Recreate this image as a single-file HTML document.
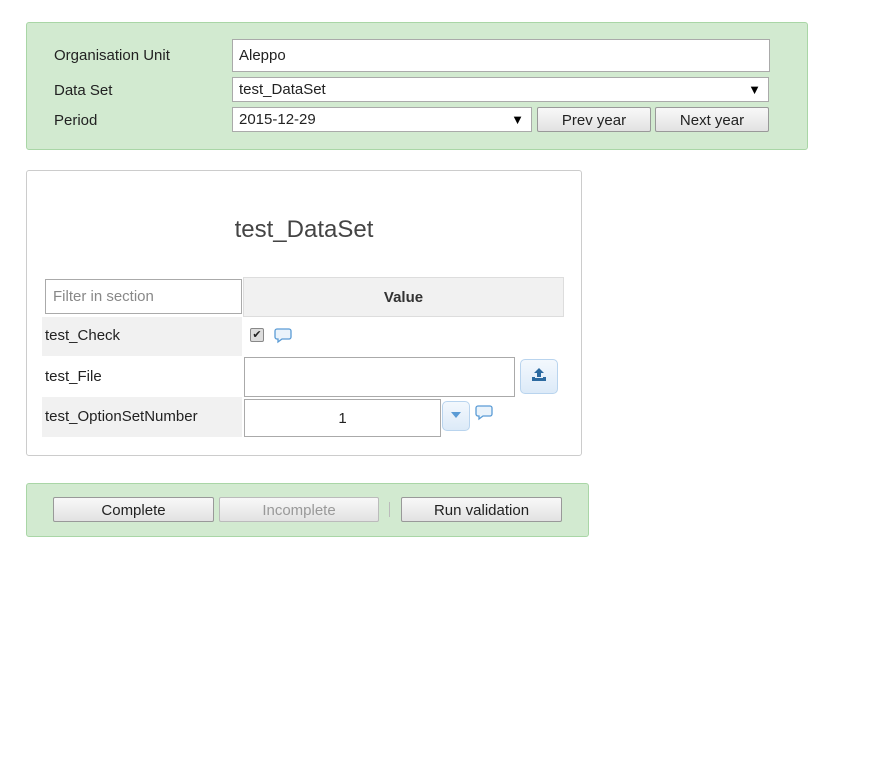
<!DOCTYPE html>
<html><head><style>
body{margin:0;width:885px;height:764px;background:#fff;font-family:"Liberation Sans",sans-serif;font-size:15px;color:#222;position:relative;overflow:hidden}
.a{position:absolute;box-sizing:border-box}
.g{background:#d2ead0;border:1px solid #a9d6a6;border-radius:3px}
.lbl{position:absolute;line-height:18px}
.inp{background:#fff;border:1px solid #aaa;line-height:normal;padding-left:6px;display:flex;align-items:center}
.btn{background:linear-gradient(#f8f8f8,#e2e2e2);border:1px solid #999;border-radius:2px;display:flex;align-items:center;justify-content:center;font-size:15px;color:#222;padding-top:2px}
.arr{position:absolute;right:7px;font-size:13px;color:#000}
</style></head><body>
<div class="a g" style="left:26px;top:22px;width:782px;height:128px"></div>
<div class="lbl" style="left:54px;top:47px">Organisation Unit</div>
<div class="lbl" style="left:54px;top:82px">Data Set</div>
<div class="lbl" style="left:54px;top:112px">Period</div>
<div class="a inp" style="left:232px;top:39px;width:538px;height:33px">Aleppo</div>
<div class="a inp" style="left:232px;top:77px;width:537px;height:25px">test_DataSet<span class="arr">▼</span></div>
<div class="a inp" style="left:232px;top:107px;width:300px;height:25px">2015-12-29<span class="arr">▼</span></div>
<div class="a btn" style="left:537px;top:107px;width:114px;height:25px">Prev year</div>
<div class="a btn" style="left:655px;top:107px;width:114px;height:25px">Next year</div>

<div class="a" style="left:26px;top:170px;width:556px;height:286px;border:1px solid #ccc;border-radius:3px"></div>
<div class="a" style="left:26px;top:216px;width:556px;text-align:center;font-size:24px;color:#444">test_DataSet</div>
<div class="a inp" style="left:45px;top:279px;width:197px;height:35px;color:#888;padding-left:7px">Filter in section</div>
<div class="a" style="left:243px;top:277px;width:321px;height:40px;background:#f1f1f1;border:1px solid #ddd;text-align:center;line-height:40px;font-weight:bold;color:#333">Value</div>
<div class="a" style="left:42px;top:317px;width:200px;height:39px;background:#f1f1f1"></div>
<div class="lbl" style="left:45px;top:327px">test_Check</div>
<div class="a" style="left:250px;top:328px;width:14px;height:14px;border:1px solid #888;border-radius:2px;background:#ddd;font-size:11px;line-height:12px;text-align:center">✔</div>
<svg class="a" style="left:274px;top:328px" width="18" height="16" viewBox="0 0 18 16"><path d="M3 1h12a2 2 0 0 1 2 2v6a2 2 0 0 1-2 2H8l-4 3v-3H3a2 2 0 0 1-2-2V3a2 2 0 0 1 2-2z" fill="#eaf3fb" stroke="#5a9bd5" stroke-width="1.3"/></svg>
<div class="lbl" style="left:45px;top:368px">test_File</div>
<div class="a inp" style="left:244px;top:357px;width:271px;height:40px"></div>
<div class="a" style="left:520px;top:359px;width:38px;height:35px;border:1px solid #b9d4ee;border-radius:5px;background:linear-gradient(#f3f8fd,#dceaf8)"></div>
<svg class="a" style="left:530px;top:367px" width="18" height="16" viewBox="0 0 18 16"><path d="M9 1l-5 5h3v4h4V6h3z" fill="#2c6aa0"/><path d="M2 10v4h14v-4h-3v1H5v-1z" fill="#2c6aa0"/></svg>
<div class="a" style="left:42px;top:397px;width:200px;height:40px;background:#f1f1f1"></div>
<div class="lbl" style="left:45px;top:408px">test_OptionSetNumber</div>
<div class="a inp" style="left:244px;top:399px;width:197px;height:38px;justify-content:center;padding:0">1</div>
<div class="a" style="left:442px;top:401px;width:28px;height:30px;border:1px solid #b9d4ee;border-radius:5px;background:linear-gradient(#f3f8fd,#dceaf8)"></div>
<svg class="a" style="left:451px;top:412px" width="10" height="6"><path d="M0 0h10L5 6z" fill="#5a9bd5"/></svg>
<svg class="a" style="left:475px;top:405px" width="18" height="16" viewBox="0 0 18 16"><path d="M3 1h12a2 2 0 0 1 2 2v6a2 2 0 0 1-2 2H8l-4 3v-3H3a2 2 0 0 1-2-2V3a2 2 0 0 1 2-2z" fill="#eaf3fb" stroke="#5a9bd5" stroke-width="1.3"/></svg>

<div class="a g" style="left:26px;top:483px;width:563px;height:54px"></div>
<div class="a btn" style="left:53px;top:497px;width:161px;height:25px">Complete</div>
<div class="a btn" style="left:219px;top:497px;width:160px;height:25px;color:#999;border-color:#bbb">Incomplete</div>
<div class="a" style="left:389px;top:502px;width:1px;height:15px;background:#bbb"></div>
<div class="a btn" style="left:401px;top:497px;width:161px;height:25px">Run validation</div>
</body></html>
